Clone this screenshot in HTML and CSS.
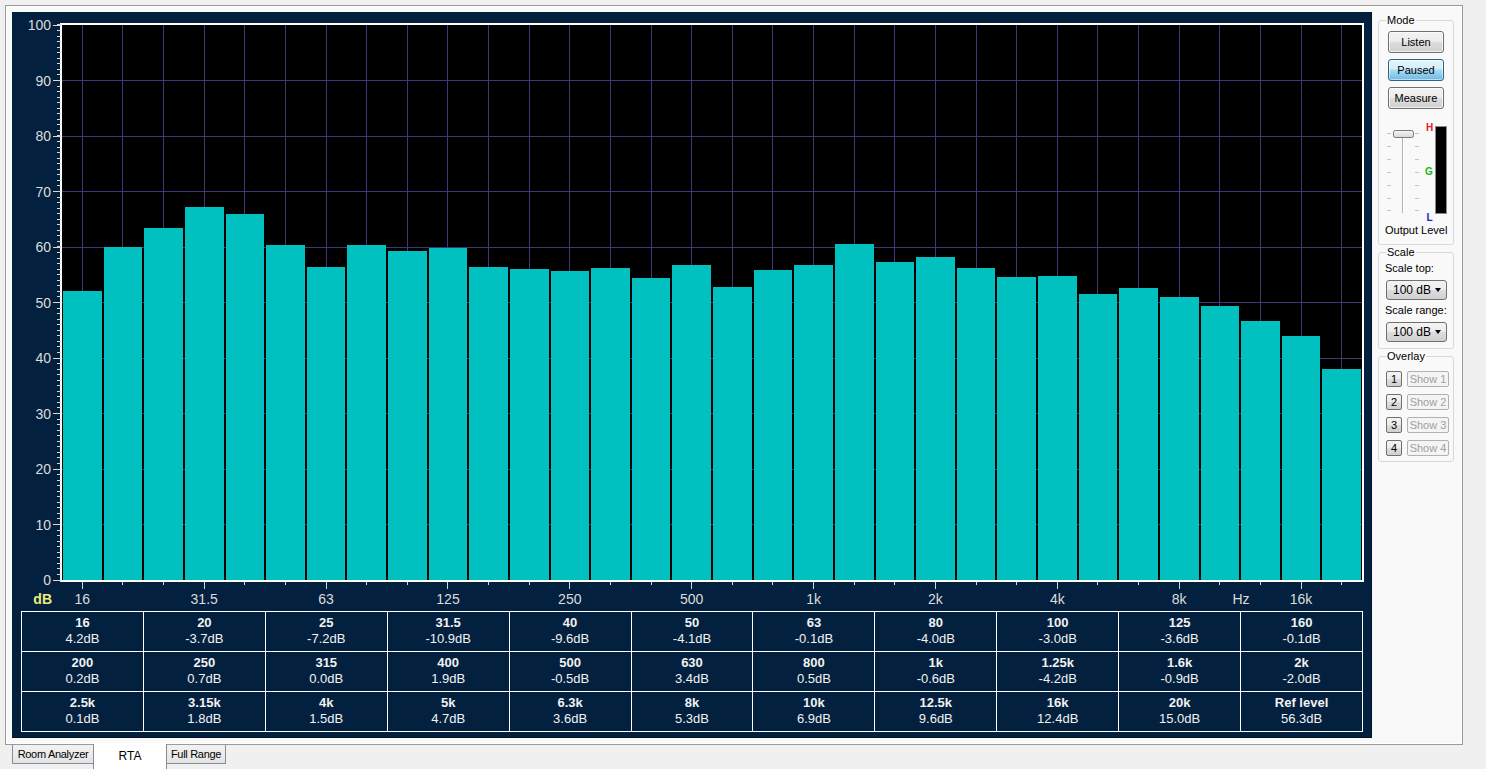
FILE: index.html
```html
<!DOCTYPE html>
<html>
<head>
<meta charset="utf-8">
<title>RTA</title>
<link rel="stylesheet" href="styles.css">
</head>
<body>
<div class="app">
  <div class="tabpage">
    <div class="rta">
      <svg class="chart" viewBox="12 12 1360 598" width="1360" height="598" xmlns="http://www.w3.org/2000/svg">
        <rect x="62" y="25" width="1300" height="555" fill="#000"/>
        <g stroke="#3e3878" stroke-width="1" shape-rendering="crispEdges">
          <line x1="62" x2="1362" y1="524.5" y2="524.5"/>
          <line x1="62" x2="1362" y1="469.5" y2="469.5"/>
          <line x1="62" x2="1362" y1="413.5" y2="413.5"/>
          <line x1="62" x2="1362" y1="358.5" y2="358.5"/>
          <line x1="62" x2="1362" y1="302.5" y2="302.5"/>
          <line x1="62" x2="1362" y1="247.5" y2="247.5"/>
          <line x1="62" x2="1362" y1="191.5" y2="191.5"/>
          <line x1="62" x2="1362" y1="136.5" y2="136.5"/>
          <line x1="62" x2="1362" y1="80.5" y2="80.5"/>
        </g>
        <line x1="81.8" x2="1362" y1="302.5" y2="302.5" stroke="#3e3878" stroke-width="555" stroke-dasharray="1 39.625" shape-rendering="crispEdges"/>
        <g fill="#00c0c0" shape-rendering="crispEdges">
          <rect x="63" y="291" width="38.6" height="289"/>
          <rect x="103.6" y="247" width="38.6" height="333"/>
          <rect x="144.3" y="228" width="38.6" height="352"/>
          <rect x="184.9" y="207" width="38.6" height="373"/>
          <rect x="225.5" y="214" width="38.6" height="366"/>
          <rect x="266.1" y="245" width="38.6" height="335"/>
          <rect x="306.8" y="267" width="38.6" height="313"/>
          <rect x="347.4" y="245" width="38.6" height="335"/>
          <rect x="388" y="251" width="38.6" height="329"/>
          <rect x="428.6" y="248" width="38.6" height="332"/>
          <rect x="469.3" y="267" width="38.6" height="313"/>
          <rect x="509.9" y="269" width="38.6" height="311"/>
          <rect x="550.5" y="271" width="38.6" height="309"/>
          <rect x="591.1" y="268" width="38.6" height="312"/>
          <rect x="631.8" y="278" width="38.6" height="302"/>
          <rect x="672.4" y="265" width="38.6" height="315"/>
          <rect x="713" y="287" width="38.6" height="293"/>
          <rect x="753.6" y="270" width="38.6" height="310"/>
          <rect x="794.3" y="265" width="38.6" height="315"/>
          <rect x="834.9" y="244" width="38.6" height="336"/>
          <rect x="875.5" y="262" width="38.6" height="318"/>
          <rect x="916.1" y="257" width="38.6" height="323"/>
          <rect x="956.8" y="268" width="38.6" height="312"/>
          <rect x="997.4" y="277" width="38.6" height="303"/>
          <rect x="1038" y="276" width="38.6" height="304"/>
          <rect x="1078.6" y="294" width="38.6" height="286"/>
          <rect x="1119.3" y="288" width="38.6" height="292"/>
          <rect x="1159.9" y="297" width="38.6" height="283"/>
          <rect x="1200.5" y="306" width="38.6" height="274"/>
          <rect x="1241.1" y="321" width="38.6" height="259"/>
          <rect x="1281.8" y="336" width="38.6" height="244"/>
          <rect x="1322.4" y="369" width="38.6" height="211"/>
        </g>
        <rect x="61" y="24" width="1302" height="557" fill="none" stroke="#fff" stroke-width="2"/>
        <g stroke="#d8d8d8" shape-rendering="crispEdges">
          <line x1="59" x2="59" y1="580.5" y2="24" stroke-width="4" stroke-dasharray="1 4.55"/>
          <line x1="57" x2="57" y1="580.5" y2="24" stroke-width="8" stroke-dasharray="1 54.5"/>
          <line x1="81.8" x2="1362" y1="583.5" y2="583.5" stroke-width="3" stroke-dasharray="1 39.625"/>
          <line x1="81.8" x2="1362" y1="585.5" y2="585.5" stroke-width="7" stroke-dasharray="1 120.875"/>
        </g>
        <g class="ylab" text-anchor="end">
          <text x="51" y="585">0</text>
          <text x="51" y="529.5">10</text>
          <text x="51" y="474">20</text>
          <text x="51" y="418.5">30</text>
          <text x="51" y="363">40</text>
          <text x="51" y="307.5">50</text>
          <text x="51" y="252">60</text>
          <text x="51" y="196.5">70</text>
          <text x="51" y="141">80</text>
          <text x="51" y="85.5">90</text>
          <text x="51" y="30">100</text>
        </g>
        <text class="dbl" x="52" y="604" text-anchor="end">dB</text>
        <g class="xlab" text-anchor="middle">
          <text x="82.3" y="604">16</text>
          <text x="204.2" y="604">31.5</text>
          <text x="326.1" y="604">63</text>
          <text x="448" y="604">125</text>
          <text x="569.8" y="604">250</text>
          <text x="691.7" y="604">500</text>
          <text x="813.6" y="604">1k</text>
          <text x="935.4" y="604">2k</text>
          <text x="1057.3" y="604">4k</text>
          <text x="1179.2" y="604">8k</text>
          <text x="1241" y="604">Hz</text>
          <text x="1301.1" y="604">16k</text>
        </g>
      </svg>
      <div class="bands">
        <div class="cell"><b>16</b><span>4.2dB</span></div>
        <div class="cell"><b>20</b><span>-3.7dB</span></div>
        <div class="cell"><b>25</b><span>-7.2dB</span></div>
        <div class="cell"><b>31.5</b><span>-10.9dB</span></div>
        <div class="cell"><b>40</b><span>-9.6dB</span></div>
        <div class="cell"><b>50</b><span>-4.1dB</span></div>
        <div class="cell"><b>63</b><span>-0.1dB</span></div>
        <div class="cell"><b>80</b><span>-4.0dB</span></div>
        <div class="cell"><b>100</b><span>-3.0dB</span></div>
        <div class="cell"><b>125</b><span>-3.6dB</span></div>
        <div class="cell"><b>160</b><span>-0.1dB</span></div>
        <div class="cell"><b>200</b><span>0.2dB</span></div>
        <div class="cell"><b>250</b><span>0.7dB</span></div>
        <div class="cell"><b>315</b><span>0.0dB</span></div>
        <div class="cell"><b>400</b><span>1.9dB</span></div>
        <div class="cell"><b>500</b><span>-0.5dB</span></div>
        <div class="cell"><b>630</b><span>3.4dB</span></div>
        <div class="cell"><b>800</b><span>0.5dB</span></div>
        <div class="cell"><b>1k</b><span>-0.6dB</span></div>
        <div class="cell"><b>1.25k</b><span>-4.2dB</span></div>
        <div class="cell"><b>1.6k</b><span>-0.9dB</span></div>
        <div class="cell"><b>2k</b><span>-2.0dB</span></div>
        <div class="cell"><b>2.5k</b><span>0.1dB</span></div>
        <div class="cell"><b>3.15k</b><span>1.8dB</span></div>
        <div class="cell"><b>4k</b><span>1.5dB</span></div>
        <div class="cell"><b>5k</b><span>4.7dB</span></div>
        <div class="cell"><b>6.3k</b><span>3.6dB</span></div>
        <div class="cell"><b>8k</b><span>5.3dB</span></div>
        <div class="cell"><b>10k</b><span>6.9dB</span></div>
        <div class="cell"><b>12.5k</b><span>9.6dB</span></div>
        <div class="cell"><b>16k</b><span>12.4dB</span></div>
        <div class="cell"><b>20k</b><span>15.0dB</span></div>
        <div class="cell"><b>Ref level</b><span>56.3dB</span></div>
      </div>
    </div>
    <div class="side">
      <fieldset class="group mode">
        <legend>Mode</legend>
        <button class="btn">Listen</button>
        <button class="btn on">Paused</button>
        <button class="btn">Measure</button>
        <svg class="level" viewBox="1379 120 74 102" width="74" height="102" xmlns="http://www.w3.org/2000/svg">
          <defs>
            <linearGradient id="thumb" x1="0" y1="0" x2="0" y2="1">
              <stop offset="0" stop-color="#f6f6f6"/>
              <stop offset="1" stop-color="#d6d6d6"/>
            </linearGradient>
          </defs>
          <g stroke="#c4c4c4" shape-rendering="crispEdges">
            <line x1="1387" x2="1391" y1="133.5" y2="133.5"/>
            <line x1="1387" x2="1391" y1="146.5" y2="146.5"/>
            <line x1="1387" x2="1391" y1="159.5" y2="159.5"/>
            <line x1="1387" x2="1391" y1="172.5" y2="172.5"/>
            <line x1="1387" x2="1391" y1="185.5" y2="185.5"/>
            <line x1="1387" x2="1391" y1="198.5" y2="198.5"/>
            <line x1="1387" x2="1391" y1="210.5" y2="210.5"/>
            <line x1="1415" x2="1419" y1="133.5" y2="133.5"/>
            <line x1="1415" x2="1419" y1="146.5" y2="146.5"/>
            <line x1="1415" x2="1419" y1="159.5" y2="159.5"/>
            <line x1="1415" x2="1419" y1="172.5" y2="172.5"/>
            <line x1="1415" x2="1419" y1="185.5" y2="185.5"/>
            <line x1="1415" x2="1419" y1="198.5" y2="198.5"/>
            <line x1="1415" x2="1419" y1="210.5" y2="210.5"/>
          </g>
          <line x1="1402.5" x2="1402.5" y1="131" y2="213" stroke="#b4b4b4" shape-rendering="crispEdges"/>
          <line x1="1403.5" x2="1403.5" y1="131" y2="213" stroke="#ffffff" shape-rendering="crispEdges"/>
          <rect x="1393.5" y="130.5" width="20" height="7" rx="2" fill="url(#thumb)" stroke="#7a7a7a"/>
          <rect x="1435.5" y="126.5" width="11" height="87" fill="#000" stroke="#8a8a8a" shape-rendering="crispEdges"/>
          <g class="lvl" text-anchor="middle">
            <text x="1429.5" y="131" fill="#e02020">H</text>
            <text x="1429" y="175" fill="#22b422">G</text>
            <text x="1429.5" y="221" fill="#1428c8">L</text>
          </g>
        </svg>
        <div class="label out">Output Level</div>
      </fieldset>
      <fieldset class="group scale">
        <legend>Scale</legend>
        <div class="label">Scale top:</div>
        <div class="combo"><span>100 dB</span><i class="arrow"></i></div>
        <div class="label gap">Scale range:</div>
        <div class="combo"><span>100 dB</span><i class="arrow"></i></div>
      </fieldset>
      <fieldset class="group overlay">
        <legend>Overlay</legend>
        <div class="ov-row"><button class="num">1</button><button class="show">Show 1</button></div>
        <div class="ov-row"><button class="num">2</button><button class="show">Show 2</button></div>
        <div class="ov-row"><button class="num">3</button><button class="show">Show 3</button></div>
        <div class="ov-row"><button class="num">4</button><button class="show">Show 4</button></div>
      </fieldset>
    </div>
  </div>
  <div class="tabs">
    <div class="tab first">Room Analyzer</div>
    <div class="tab active">RTA</div>
    <div class="tab last">Full Range</div>
  </div>
</div>
</body>
</html>
```
FILE: styles.css
```css
* { box-sizing: border-box; }
html, body { margin: 0; }
body {
  width: 1486px;
  height: 769px;
  overflow: hidden;
  background: #f0f0f0;
  font-family: "Liberation Sans", Arial, sans-serif;
  font-size: 11px;
  color: #000;
}
.app { padding: 5px 0 0 5px; }

.tabpage {
  width: 1458px;
  height: 740px;
  border: 1px solid #9a9a9a;
  box-shadow: inset 0 0 0 1px #ffffff;
  background: #f9f9f9;
  display: flex;
  gap: 6px;
  padding: 6px 0 0 6px;
}

/* chart panel */
.rta {
  width: 1360px;
  height: 726px;
  background: #03213f;
  box-shadow: inset -1px -1px 0 #011428;
}
.chart { display: block; }
.chart text { font-family: "Liberation Sans", Arial, sans-serif; font-size: 14px; fill: #dcdcdc; }
.chart .dbl { font-weight: bold; fill: #ecec7c; }

.bands {
  display: grid;
  grid-template-columns: repeat(11, 1fr);
  grid-auto-rows: 40px;
  width: 1342px;
  margin: 1px 0 0 9px;
  border-left: 1px solid #fff;
  border-top: 1px solid #fff;
  color: #f2f2f2;
  font-size: 13px;
  line-height: 16px;
}
.cell {
  border-right: 1px solid #fff;
  border-bottom: 1px solid #fff;
  display: flex;
  flex-direction: column;
  align-items: center;
  justify-content: center;
  padding-bottom: 1px;
}
.cell b { font-weight: bold; }

/* side panel */
.side {
  width: 76px;
  display: flex;
  flex-direction: column;
}
.group {
  margin: 0;
  padding: 0;
  min-width: 0;
  border: 1px solid #d5d9dc;
  border-radius: 3px;
  display: flex;
  flex-direction: column;
  align-items: flex-start;
}
.group legend {
  margin-left: 7px;
  padding: 0 1px;
  font-size: 11px;
  line-height: 13px;
}
.mode { margin-top: 2px; padding: 4px 0 7px 0; }
.scale { margin-top: 1px; padding: 3px 0 6px 0; }
.overlay { margin-top: 1px; padding: 8px 0 5px 0; }

button {
  font-family: "Liberation Sans", Arial, sans-serif;
  font-size: 11px;
  color: #000;
  margin: 0;
  padding: 0;
}
.btn {
  width: 56px;
  height: 22px;
  margin-left: 9px;
  border: 1px solid #707070;
  border-radius: 3px;
  background: linear-gradient(#f3f3f3 0%, #ebebeb 50%, #dddddd 50%, #d0d0d0 100%);
  box-shadow: inset 0 0 0 1px rgba(255,255,255,0.7);
}
.btn + .btn { margin-top: 6px; }
.btn.on {
  border-color: #2c628b;
  background: linear-gradient(#e6f5fc 0%, #d3edfa 45%, #a9dbf6 50%, #6fb8e2 100%);
  box-shadow: inset 0 0 0 1px rgba(255,255,255,0.5);
}
.level { display: block; margin-top: 11px; }
.label { margin-left: 6px; line-height: 13px; white-space: nowrap; }
.out { margin-top: 2px; }
.label.gap { margin-top: 4px; }

.combo {
  width: 61px;
  height: 20px;
  margin: 5px 0 0 7px;
  border: 1px solid #707070;
  border-radius: 3px;
  background: linear-gradient(#f3f3f3 0%, #ebebeb 50%, #dddddd 50%, #d0d0d0 100%);
  display: flex;
  align-items: center;
  justify-content: space-between;
  padding: 0 5px 0 6px;
  font-size: 12px;
}
.arrow {
  width: 0;
  height: 0;
  border-left: 3.5px solid transparent;
  border-right: 3.5px solid transparent;
  border-top: 4px solid #000;
}

.ov-row {
  display: flex;
  gap: 5px;
  margin-left: 7px;
  height: 16px;
}
.ov-row + .ov-row { margin-top: 7px; }
.num {
  width: 16px;
  height: 16px;
  border: 1px solid #707070;
  border-radius: 2px;
  background: linear-gradient(#f3f3f3 0%, #ebebeb 50%, #dddddd 50%, #d0d0d0 100%);
  font-size: 11px;
  line-height: 14px;
}
.show {
  width: 42px;
  height: 16px;
  border: 1px solid #adb2b5;
  border-radius: 2px;
  background: #f4f4f4;
  color: #a0a0a0;
  font-size: 11px;
  line-height: 14px;
}

.lvl text { font-family: "Liberation Sans", Arial, sans-serif; font-size: 10px; font-weight: bold; }

/* bottom tabs */
.tabs {
  display: flex;
  align-items: flex-start;
  padding-left: 7px;
}
.tab {
  height: 19px;
  line-height: 18px;
  text-align: center;
  font-size: 11px;
  letter-spacing: -0.3px;
  border-bottom: 1px solid #898c95;
  background: linear-gradient(#f2f2f2, #e4e4e4);
}
.tab.first { width: 81px; border-left: 1px solid #898c95; }
.tab.last { width: 59px; border-right: 1px solid #898c95; }
.tab.active {
  width: 74px;
  height: 26px;
  margin-top: -1px;
  line-height: 25px;
  background: #ffffff;
  border-bottom: none;
  border-left: 1px solid #898c95;
  border-right: 1px solid #898c95;
  font-size: 12px;
  letter-spacing: 0;
}
```
